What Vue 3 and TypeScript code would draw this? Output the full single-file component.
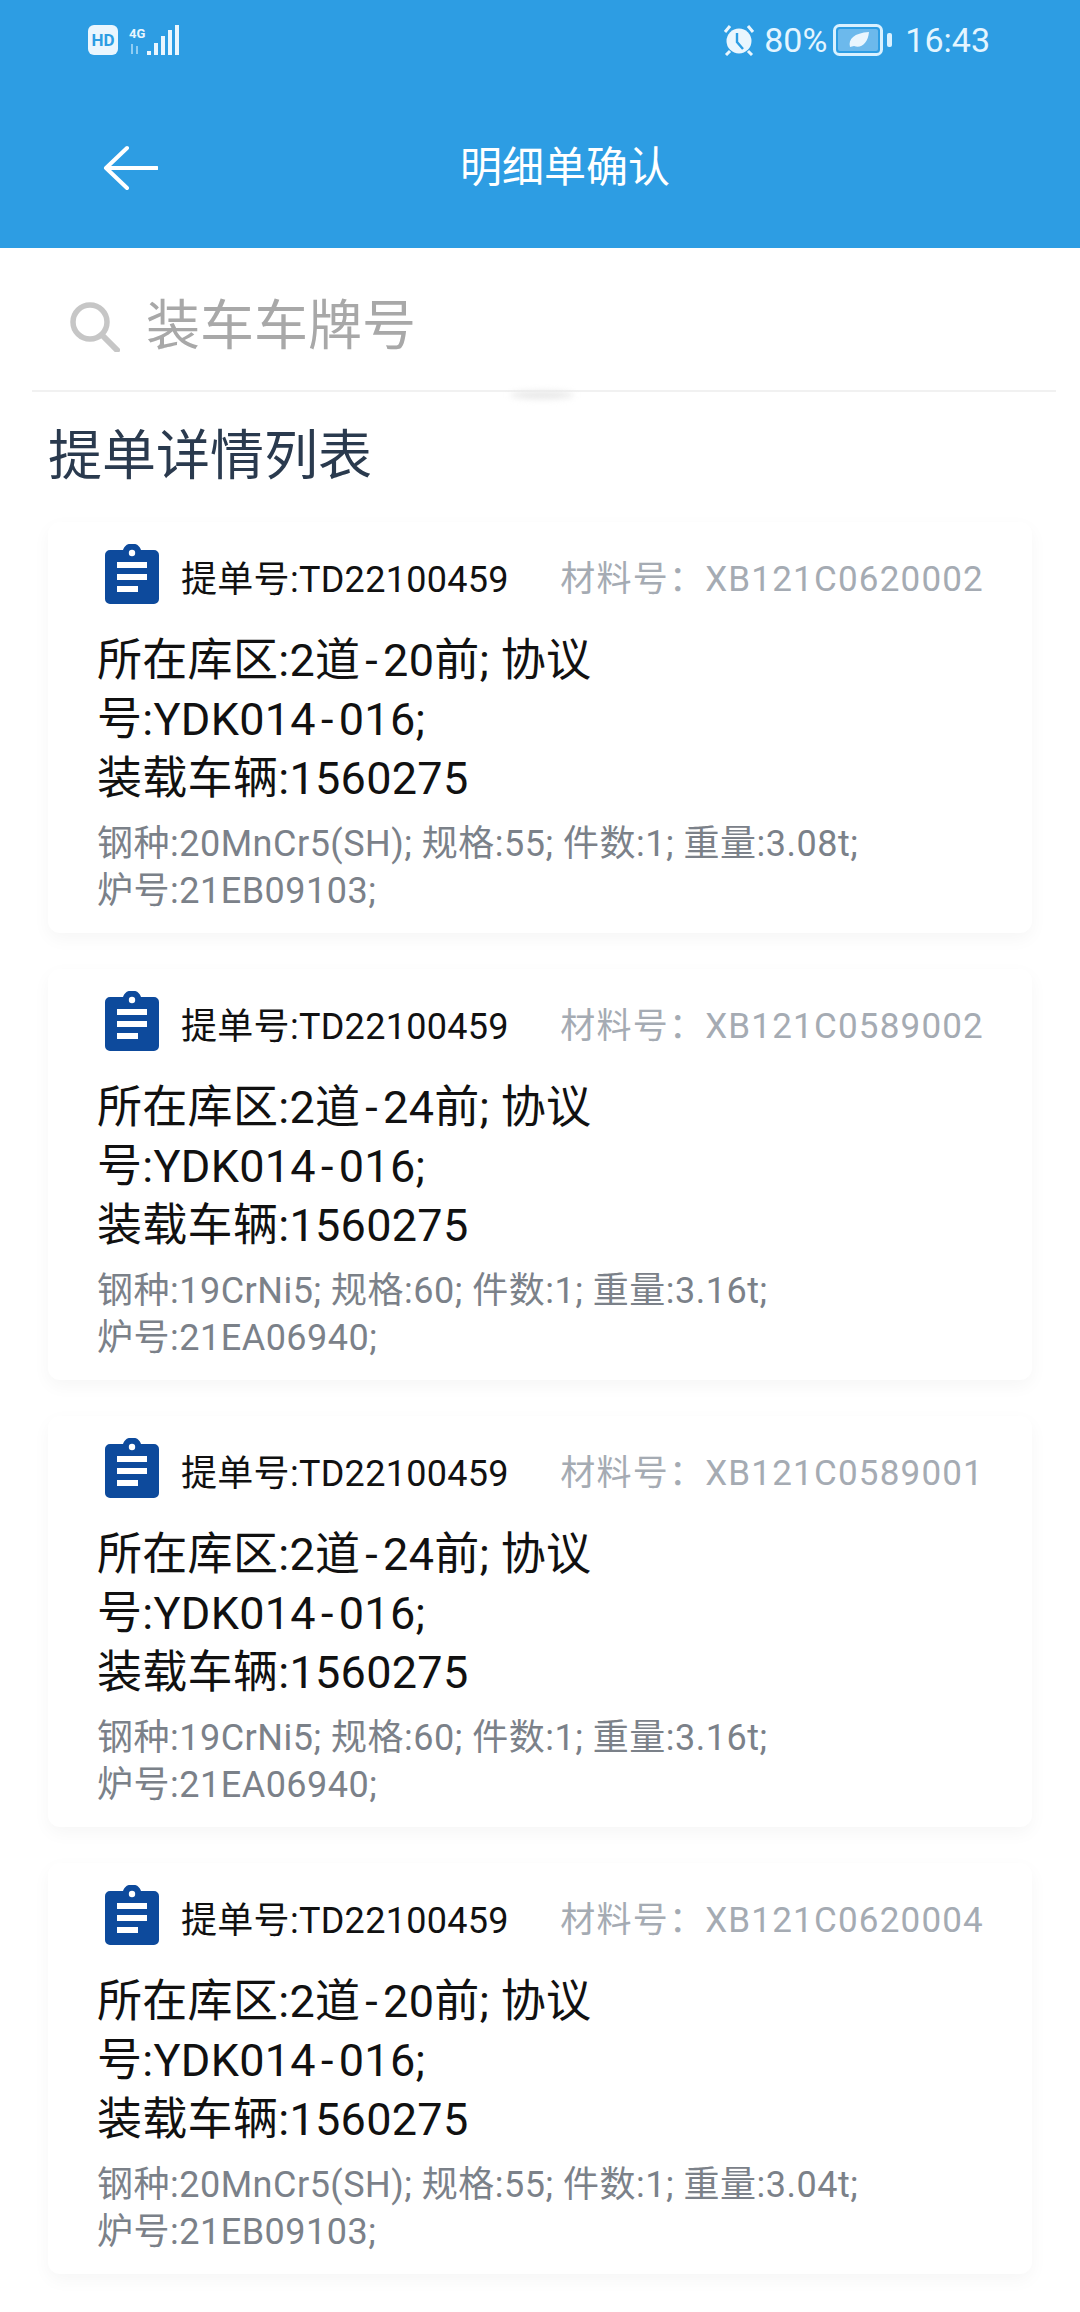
<template>
  <div class="page">
    <!-- Blue header: status bar and title -->
    <header class="header">
      <div class="status">
        <svg class="status-left" width="92" height="32" viewBox="0 0 92 32">
          <rect x="0" y="1" width="30" height="30" rx="6" fill="#eaf6fe" />
          <text x="15" y="22" text-anchor="middle" class="hd">HD</text>
          <text x="41" y="14" class="net">4G</text>
          <path d="M44 20v10M49 22v8" stroke="#8fcdf3" stroke-width="2" />
          <rect x="59" y="27" width="4" height="4" fill="#eaf6fe" />
          <rect x="66" y="19" width="4" height="12" fill="#eaf6fe" />
          <rect x="73" y="12" width="4" height="19" fill="#eaf6fe" />
          <rect x="80" y="6" width="4" height="25" fill="#eaf6fe" />
          <rect x="87" y="1" width="4" height="30" fill="#eaf6fe" />
        </svg>
        <div class="status-right">
          <svg width="34" height="32" viewBox="0 0 32 32">
            <circle cx="16" cy="17" r="12.5" fill="#eaf6fe" />
            <path d="M14 9v9l6 7" fill="none" stroke="#2d9de3" stroke-width="2.4" />
            <path d="M2 8l5-6M30 8l-5-6M7 27l-4 4M25 27l4 4" stroke="#eaf6fe" stroke-width="3" />
          </svg>
          <span class="pct">80%</span>
          <svg class="battery" width="60" height="32" viewBox="0 0 60 32">
            <rect x="1.5" y="1.5" width="47" height="29" rx="5" fill="none" stroke="#d9f1ff" stroke-width="3" />
            <rect x="5" y="5" width="40" height="22" rx="2" fill="#6cb9ec" />
            <path d="M17 23c-2-8 4-14 19-15-1 11-8 17-15 14z" fill="#eaf6fe" />
            <rect x="54" y="9" width="5" height="14" rx="2" fill="#d9f1ff" />
          </svg>
          <span class="time">16:43</span>
        </div>
      </div>
      <div class="nav">
        <svg width="55" height="46" viewBox="0 0 55 46">
          <path d="M24 3L3 23l21 20M3 23h51" fill="none" stroke="#fff" stroke-width="4" stroke-linecap="round" stroke-linejoin="round" />
        </svg>
        <span class="nav-title">明细单确认</span>
      </div>
    </header>

    <!-- Search -->
    <div class="search">
      <svg width="50" height="50" viewBox="0 0 50 50">
        <circle cx="20" cy="20" r="17" fill="none" stroke="#c6c6c6" stroke-width="5.500" />
        <path d="M32 33l15 15" stroke="#c6c6c6" stroke-width="6" stroke-linecap="round" />
      </svg>
      <span class="placeholder">装车车牌号</span>
    </div>
    <div class="divider"><i class="smudge"></i></div>

    <h2 class="list-title">提单详情列表</h2>

    <!-- Cards -->
    <div class="list">
      <section v-for="item in items" :key="item.material" class="card">
        <div class="card-head">
          <svg class="clip" width="54" height="60" viewBox="0 0 54 60">
            <path
              d="M5 6h13a9.500 9.500 0 0 1 18 0h13a5 5 0 0 1 5 5v44a5 5 0 0 1-5 5H5a5 5 0 0 1-5-5V11a5 5 0 0 1 5-5z"
              fill="#0d4a9c"
            />
            <circle cx="27" cy="9" r="3.200" fill="#fff" />
            <rect x="12" y="18" width="30" height="6" fill="#fff" />
            <rect x="12" y="30" width="30" height="6" fill="#fff" />
            <rect x="12" y="42" width="21" height="6" fill="#fff" />
          </svg>
          <span class="bill">提单号:TD22100459</span>
          <span class="material">材料号&#xFF1A;{{ item.material }}</span>
        </div>
        <p class="main">
          所在库区:2道<span class="dash">-</span>{{ item.slot }}前; 协议<br />号:YDK014<span class="dash">-</span>016;<br />装载车辆:1560275
        </p>
        <p class="sub">钢种:{{ item.steel }}; 规格:{{ item.spec }}; 件数:1; 重量:{{ item.weight }}t;</p>
        <p class="sub">炉号:{{ item.heat }};</p>
      </section>
    </div>
  </div>
</template>

<script setup lang="ts">
interface BillItem {
  material: string
  slot: number
  steel: string
  spec: number
  weight: string
  heat: string
}

const items: BillItem[] = [
  { material: 'XB121C0620002', slot: 20, steel: '20MnCr5(SH)', spec: 55, weight: '3.08', heat: '21EB09103' },
  { material: 'XB121C0589002', slot: 24, steel: '19CrNi5', spec: 60, weight: '3.16', heat: '21EA06940' },
  { material: 'XB121C0589001', slot: 24, steel: '19CrNi5', spec: 60, weight: '3.16', heat: '21EA06940' },
  { material: 'XB121C0620004', slot: 20, steel: '20MnCr5(SH)', spec: 55, weight: '3.04', heat: '21EB09103' },
]
</script>

<style scoped>
.page {
  width: 1080px;
  height: 2312px;
  overflow: hidden;
  background: #fff;
  font-family: Roboto, "Noto Sans CJK SC", sans-serif;
  color: #111;
}
.header {
  height: 248px;
  background: #2d9de3;
  box-sizing: border-box;
  padding-top: 24px;
}
.status {
  display: flex;
  justify-content: space-between;
  align-items: center;
  height: 32px;
  padding: 0 90px 0 88px;
  color: #e4f5ff;
}
.status-right {
  display: flex;
  align-items: center;
}
.pct {
  font-size: 34px;
  margin-left: 8px;
}
.battery {
  margin-left: 6px;
}
.time {
  font-size: 34px;
  margin-left: 12px;
}
.hd {
  font: 700 17px Roboto, sans-serif;
  fill: #2d9de3;
}
.net {
  font: 700 13px Roboto, sans-serif;
  fill: #eaf6fe;
}
.nav {
  display: flex;
  align-items: center;
  height: 46px;
  margin-top: 89px;
  padding-left: 103px;
}
.nav-title {
  margin-left: 302px;
  font-size: 42px;
  color: #fff;
  line-height: 46px;
}
.search {
  display: flex;
  align-items: center;
  gap: 26px;
  height: 142px;
  box-sizing: border-box;
  padding: 16px 0 0 70px;
}
.placeholder {
  font-size: 54px;
  color: #a8a8a8;
  line-height: 60px;
}
.divider {
  position: relative;
  height: 2px;
  margin: 0 24px 0 32px;
  background: #f1f1f1;
}
.smudge {
  position: absolute;
  left: 478px;
  top: 1px;
  width: 64px;
  height: 8px;
  border-radius: 50%;
  background: #e8e8e8;
  filter: blur(3px);
}
.list-title {
  margin: 35px 0 0 48px;
  font-size: 54px;
  font-weight: 400;
  line-height: 60px;
  color: #2a3a4e;
}
.list {
  display: flex;
  flex-direction: column;
  gap: 36px;
  margin: 35px 48px 0;
}
.card {
  padding: 22px 48px 18px 49px;
  height: 411px;
  box-sizing: border-box;
  background: #fff;
  border-radius: 12px;
  box-shadow: 0 6px 18px rgba(0, 0, 0, 0.04);
}
.card-head {
  display: flex;
  align-items: center;
  height: 60px;
}
.clip {
  flex: none;
  margin-left: 8px;
}
.bill {
  margin: 11px 0 0 22px;
  font-size: 36px;
  line-height: 44px;
  letter-spacing: 0.3px;
  color: #111;
}
.material {
  margin: 11px 0 0 auto;
  font-size: 35px;
  line-height: 44px;
  letter-spacing: 1.2px;
  color: #a5abb3;
  white-space: nowrap;
}
.main {
  margin: 27px 0 0;
  font-size: 45px;
  line-height: 59px;
  letter-spacing: 0.3px;
}
.dash {
  margin: 0 5px;
}
.sub {
  margin: 0;
  font-size: 36px;
  line-height: 47px;
  letter-spacing: 0.5px;
  color: #7b8189;
}
.main + .sub {
  margin-top: 13px;
}
</style>
